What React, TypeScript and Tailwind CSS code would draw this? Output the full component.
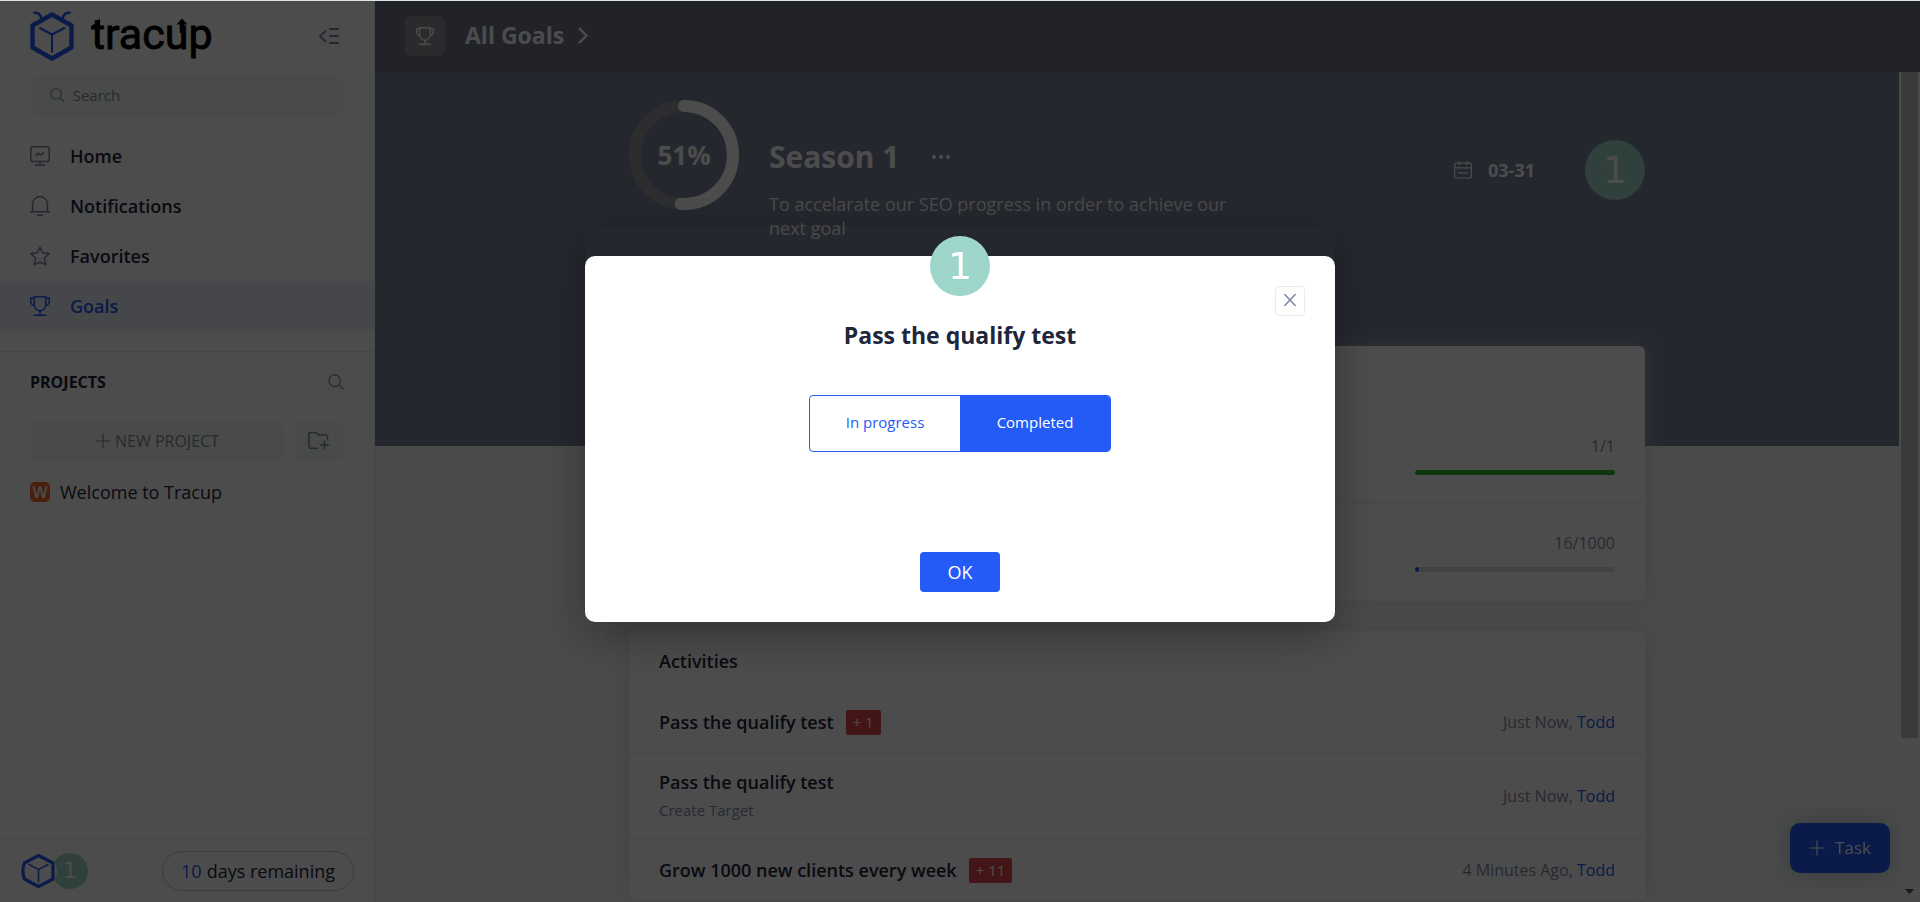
import type { ReactNode } from "react";

type IconProps = { className?: string };

function HexMark({ className }: IconProps) {
  return (
    <svg viewBox="0 0 44 50" className={className} fill="none" stroke="currentColor" aria-hidden="true">
      <path d="M22 3.5 41.5 14.5V36.5L22 47.5 2.5 36.5V14.5Z" strokeWidth="4.5" strokeLinejoin="round" />
      <path d="M10 17 22 23.5 34.5 17M22 23.5V41" strokeWidth="2" strokeLinecap="round" />
      <path d="M4.5 1.8C8 1.6 10.500 3.500 11.500 7.500M39.500 1.800C36 1.600 33.500 3.500 32.500 7.500" strokeWidth="2.600" strokeLinecap="round" />
    </svg>
  );
}

function RoundMark({ className }: IconProps) {
  return (
    <svg viewBox="0 0 36 36" className={className} fill="none" stroke="currentColor" aria-hidden="true">
      <path d="M17.500 2.500 32 10V26L17.500 33.500 3.500 26C1.500 21 1.500 15 3.500 10Z" strokeWidth="3.200" strokeLinejoin="round" />
      <path d="M8 11.500 17.500 16.500 27 11.500M17.500 16.500V29" strokeWidth="1.500" strokeLinecap="round" />
    </svg>
  );
}

function Wordmark({ className }: IconProps) {
  return (
    <svg viewBox="0 0 130 56" className={className} role="img" aria-label="tracup">
      <text x="0" y="41" fontFamily="Roboto, 'Open Sans', sans-serif" fontSize="43" fontWeight="400" fill="#000" stroke="#000" strokeWidth=".9">
        tracup
      </text>
      <path d="M0 19 9 10.500V19Z" fill="#000" />
      <path d="M85.500 16.500 91 10.500 96.500 16.500Z" fill="#000" />
      <path d="M91 15V25" stroke="#000" strokeWidth="4.500" />
    </svg>
  );
}

function TrophyIcon({ className }: IconProps) {
  return (
    <svg viewBox="0 0 20 20" className={className} fill="none" stroke="currentColor" strokeWidth="1.500" aria-hidden="true">
      <path d="M4.200.8H15.800V8.500C15.800 12 13.200 14.700 10 14.700S4.200 12 4.200 8.500Z" />
      <path d="M4.200 2H.8V5.500C.8 7.500 2 9 4.200 9.500M15.800 2H19.200V5.500C19.200 7.500 18 9 15.800 9.500M10 14.700V19M3.500 19.200H16.500" />
    </svg>
  );
}

function HomeIcon({ className }: IconProps) {
  return (
    <svg viewBox="0 0 20 20" className={className} fill="none" stroke="currentColor" strokeWidth="1.500" aria-hidden="true">
      <rect x=".8" y=".8" width="18.400" height="14.800" rx="1.500" />
      <path d="M5.500 10 8.300 7.300 10.800 9 14 6.300M10 15.600V19M5 19.200H15" />
    </svg>
  );
}

function BellIcon({ className }: IconProps) {
  return (
    <svg viewBox="0 0 20 20" className={className} fill="none" stroke="currentColor" strokeWidth="1.500" aria-hidden="true">
      <path d="M2.500 15.500V8.300C2.500 4 5.800.8 10 .8S17.500 4 17.500 8.300V15.500M0 15.700H20M7 19.200H13" />
    </svg>
  );
}

function StarIcon({ className }: IconProps) {
  return (
    <svg viewBox="0 0 20 20" className={className} fill="none" stroke="currentColor" strokeWidth="1.500" strokeLinejoin="round" aria-hidden="true">
      <path d="M10 1.200 12.700 6.700 19 7.600 14.500 12 15.800 18.600 10 16.300 4.200 18.600 5.500 12 1 7.600 7.300 6.700Z" />
    </svg>
  );
}

function SearchIcon({ className }: IconProps) {
  return (
    <svg viewBox="0 0 16 16" className={className} fill="none" stroke="currentColor" strokeWidth="1.300" aria-hidden="true">
      <circle cx="6.700" cy="6.700" r="5.800" />
      <path d="M11 11 15.300 15.300" />
    </svg>
  );
}

function PlusIcon({ className }: IconProps) {
  return (
    <svg viewBox="0 0 16 16" className={className} fill="none" stroke="currentColor" strokeWidth="1.200" aria-hidden="true">
      <path d="M8 .5V15.500M.5 8H15.500" />
    </svg>
  );
}

function FolderPlusIcon({ className }: IconProps) {
  return (
    <svg viewBox="0 0 22 20" className={className} fill="none" stroke="currentColor" strokeWidth="1.500" strokeLinejoin="round" aria-hidden="true">
      <path d="M10 17.300H2.500C1.700 17.300 1 16.600 1 15.800V3C1 2.200 1.700 1.500 2.500 1.500H8L10.500 4H18C18.800 4 19.500 4.700 19.500 5.500V9M16.500 9.500V18.500M12 14H21" />
    </svg>
  );
}

function CollapseIcon({ className }: IconProps) {
  return (
    <svg viewBox="0 0 20 16" className={className} fill="none" stroke="currentColor" strokeWidth="1.800" strokeLinecap="round" aria-hidden="true">
      <path d="M6.500 3 1 8.200 6.500 13.500M11 1H19M11 8H19M11 15H19" />
    </svg>
  );
}

function CalendarIcon({ className }: IconProps) {
  return (
    <svg viewBox="0 0 18 18" className={className} fill="none" stroke="currentColor" strokeWidth="1.200" aria-hidden="true">
      <rect x=".6" y="2.200" width="16.800" height="14.800" rx="1.500" />
      <path d="M.6 6.800H17.400M5 0V4.500M13 0V4.500M4 11.800H14" />
    </svg>
  );
}

function ProgressRing({ percent }: { percent: number }) {
  const r = 49;
  const c = 2 * Math.PI * r;
  return (
    <div className="relative flex size-[110px] shrink-0 items-center justify-center">
      <svg viewBox="0 0 110 110" className="absolute inset-0 -rotate-90" fill="none" strokeWidth="12" aria-hidden="true">
        <circle cx="55" cy="55" r={r} stroke="#9698a2" />
        <circle cx="55" cy="55" r={r} stroke="#fff" strokeLinecap="round" strokeDasharray={`${(c * percent) / 100} ${c}`} />
      </svg>
      <span className="relative text-[26px] font-bold">{percent}%</span>
    </div>
  );
}

function Avatar({ className }: IconProps) {
  return (
    <span className={`flex shrink-0 items-center justify-center rounded-full bg-[#9ed6cb] font-['DejaVu_Sans',sans-serif] text-white ${className}`}>
      1
    </span>
  );
}

function NavItem({ icon, label, active = false }: { icon: ReactNode; label: string; active?: boolean }) {
  return (
    <a
      href="#"
      aria-current={active ? "page" : undefined}
      className={`flex h-[50px] items-center gap-5 px-[30px] text-lg font-semibold ${
        active ? "bg-[#e9eefa] text-[#245bf7]" : "text-[#20263a]"
      }`}
    >
      <span className={active ? "" : "text-[#7b85a0]"}>{icon}</span>
      {label}
    </a>
  );
}

function Sidebar() {
  return (
    <aside className="flex w-[375px] shrink-0 flex-col border-r border-[#e8ecf0] bg-white">
      <div className="flex h-[75px] items-start justify-between pt-[7px] pr-[35px] pl-[30px]">
        <a href="#" className="flex items-center gap-[17px]">
          <HexMark className="h-[50px] w-11 text-[#245bf7]" />
          <Wordmark className="h-14 w-[130px]" />
        </a>
        <button type="button" aria-label="Collapse sidebar" className="mt-5 text-[#7b85a0]">
          <CollapseIcon className="h-4 w-5" />
        </button>
      </div>
      <label className="mr-[30px] ml-[30px] flex h-10 items-center gap-2 rounded-md bg-[#f5faf8] px-5 pb-[2px] text-[#858ca6]">
        <SearchIcon className="size-4" />
        <input
          type="search"
          aria-label="Search"
          placeholder="Search"
          className="w-full bg-transparent text-[15px] outline-none placeholder:text-[#858ca6]"
        />
      </label>
      <nav className="mt-[15px]">
        <NavItem icon={<HomeIcon className="size-5" />} label="Home" />
        <NavItem icon={<BellIcon className="size-5" />} label="Notifications" />
        <NavItem icon={<StarIcon className="size-5" />} label="Favorites" />
        <NavItem icon={<TrophyIcon className="size-5" />} label="Goals" active />
      </nav>
      <section className="mt-5 flex-1 border-t border-[#e8ecf0] px-[30px] pt-[20px]">
        <div className="flex items-center justify-between">
          <h2 className="text-base leading-5 font-bold text-[#20263a]">PROJECTS</h2>
          <button type="button" aria-label="Search projects" className="text-[#858ca6]">
            <SearchIcon className="size-4" />
          </button>
        </div>
        <div className="mt-[29px] flex gap-[10px]">
          <button type="button" className="flex h-10 flex-1 items-center justify-center gap-1 rounded-md bg-[#f5faf8] text-base text-[#858ca6]">
            <PlusIcon className="size-4" />
            NEW PROJECT
          </button>
          <button type="button" aria-label="New folder" className="flex h-10 w-[50px] items-center justify-center rounded-md bg-[#f5faf8] text-[#7b85a0]">
            <FolderPlusIcon className="h-5 w-[22px]" />
          </button>
        </div>
        <a href="#" className="mt-4 flex h-[30px] items-center gap-[10px] text-lg text-[#20263a]">
          <span className="flex size-5 items-center justify-center rounded-[5px] bg-[#f0692c] text-base leading-5 font-semibold text-white">W</span>
          Welcome to Tracup
        </a>
      </section>
      <footer className="flex h-16 items-center justify-between border-t border-[#e8ecf0] pr-5 pl-[21px]">
        <div className="flex items-center">
          <span className="relative z-10 rounded-full bg-white">
            <RoundMark className="size-9 text-[#245bf7]" />
          </span>
          <Avatar className="-ml-[5px] size-9 text-[22px]" />
        </div>
        <a href="#" className="flex h-10 items-center rounded-full border border-[#c4c8d2] px-[18px] text-lg text-[#20263a]">
          <span className="mr-[5px] text-[#245bf7]">10</span>days remaining
        </a>
      </footer>
    </aside>
  );
}

function TargetRow({ value, max, done = false }: { value: number; max: number; done?: boolean }) {
  return (
    <li className="flex h-[97px] items-center justify-end border-b border-[#eceef4] px-[30px] pb-[2px] last:border-b-0">
      <div className="w-[200px]">
        <p className="text-right text-base leading-6 text-[#858ca6]">
          {value}/{max}
        </p>
        <div className="mt-3 h-[5px] overflow-hidden rounded-full bg-[#e1e1e3]">
          <div className={`h-full rounded-full ${done ? "bg-[#29b82b]" : "bg-[#245bf7]"}`} style={{ width: `${Math.max((value / max) * 100, 2)}%` }} />
        </div>
      </div>
    </li>
  );
}

function ActivityRow({ title, badge, note, time }: { title: string; badge?: string; note?: string; time: string }) {
  return (
    <li className={`flex items-center justify-between border-b border-[#eceef4] px-[30px] ${note ? "h-[87px]" : "h-[61px]"}`}>
      <div>
        <div className="flex items-center gap-3">
          <h3 className="text-lg leading-6 font-semibold text-[#20263a]">{title}</h3>
          {badge && <span className="rounded-xs bg-[#e5484b] px-[7px] text-[15px] leading-[25px] text-white">{badge}</span>}
        </div>
        {note && <p className="mt-1 text-[15px] leading-6 text-[#858ca6]">{note}</p>}
      </div>
      <p className="text-base leading-6 text-[#858ca6]">
        {time},{" "}
        <a href="#" className="text-[#245bf7]">
          Todd
        </a>
      </p>
    </li>
  );
}

function Main() {
  return (
    <main className="flex min-w-0 flex-1 flex-col">
      <header className="flex h-[71px] shrink-0 items-center gap-5 bg-[#6e768b] px-[30px] pb-[2px] text-white">
        <span className="flex size-10 items-center justify-center rounded-md bg-[#8f9299]">
          <TrophyIcon className="size-[18px]" />
        </span>
        <h1>
          <a href="#" className="flex items-center gap-[14px] text-[23px] font-bold">
            All Goals
            <svg viewBox="0 0 10 17" className="h-[17px] w-[10px]" fill="none" stroke="currentColor" strokeWidth="2.400" aria-hidden="true">
              <path d="M1 1 8.500 8.500 1 16" />
            </svg>
          </a>
        </h1>
      </header>
      <div className="flex min-h-0 flex-1">
        <div className="relative min-w-0 flex-1 overflow-y-auto bg-[#f5faf8] [scrollbar-width:none]">
          <section className="h-[374px] bg-[#7c849b] text-white">
            <div className="mx-auto flex max-w-[1016px] items-start pt-7">
              <ProgressRing percent={51} />
              <div className="ml-[30px] flex-1 pt-9">
                <div className="flex items-center gap-8">
                  <h2 className="text-[30px] leading-[42px] font-bold">Season 1</h2>
                  <button type="button" aria-label="More actions">
                    <svg viewBox="0 0 18 4" className="h-1 w-[18px]" fill="currentColor" aria-hidden="true">
                      <circle cx="2" cy="2" r="2" />
                      <circle cx="9" cy="2" r="2" />
                      <circle cx="16" cy="2" r="2" />
                    </svg>
                  </button>
                </div>
                <p className="mt-[14px] max-w-[480px] text-lg leading-6 text-white/90">
                  To accelarate our SEO progress in order to achieve our next goal
                </p>
              </div>
              <div className="flex items-center pt-10">
                <CalendarIcon className="size-[18px]" />
                <time className="mr-[50px] ml-4 text-lg font-bold">03-31</time>
                <Avatar className="size-[60px] text-[38px]" />
              </div>
            </div>
          </section>
          <div className="mx-auto -mt-[100px] flex max-w-[1016px] flex-col gap-[30px]">
            <section className="rounded-md bg-white pt-[61px] shadow-[0_0_20px_rgba(200,200,215,0.5)]">
              <ul>
                <TargetRow value={1} max={1} done />
                <TargetRow value={16} max={1000} />
              </ul>
            </section>
            <section className="rounded-md bg-white shadow-[0_0_20px_rgba(200,200,215,0.5)]">
              <h2 className="flex h-[61px] items-center px-[30px] pb-[2px] text-lg leading-6 font-semibold text-[#20263a]">Activities</h2>
              <ul>
                <ActivityRow title="Pass the qualify test" badge="+ 1" time="Just Now" />
                <ActivityRow title="Pass the qualify test" note="Create Target" time="Just Now" />
                <ActivityRow title="Grow 1000 new clients every week" badge="+ 11" time="4 Minutes Ago" />
              </ul>
            </section>
          </div>
        </div>
        <div className="flex w-[21px] shrink-0 flex-col items-center justify-between bg-[#fbfbfb] pb-2" aria-hidden="true">
          <div className="h-[81%] w-[17px] bg-[#c1c1c1]" />
          <svg viewBox="0 0 9 5" className="h-[5px] w-[9px]" fill="#505050">
            <path d="M0 0H9L4.500 5Z" />
          </svg>
        </div>
      </div>
      <button
        type="button"
        className="fixed right-[30px] bottom-[29px] flex h-[50px] w-[100px] items-center justify-center gap-[10px] rounded-[10px] bg-[#245bf7] text-[17px] font-medium text-white shadow-[0_0_24px_rgba(120,120,140,0.45)]"
      >
        <PlusIcon className="size-4" />
        Task
      </button>
    </main>
  );
}

function StatusDialog() {
  return (
    <div className="fixed inset-x-0 top-px bottom-0 z-20 flex items-start justify-center bg-black/70 pt-[225px]">
      <div role="dialog" aria-modal="true" aria-labelledby="dialog-title" className="w-[750px] max-w-full rounded-[10px] pt-[30px] shadow-[0_12px_48px_rgba(0,0,0,0.35)]">
        <div className="relative flex flex-col items-center rounded-[10px] bg-white pt-[59px] pb-[30px]">
          <Avatar className="absolute -top-5 size-[60px] text-[38px]" />
          <button
            type="button"
            aria-label="Close"
            className="absolute top-[30px] right-[30px] flex size-[30px] items-center justify-center rounded border border-[#ebe9f5] text-[#7b85a0]"
          >
            <svg viewBox="0 0 12 12" className="mb-0.5 size-3" fill="none" stroke="currentColor" strokeWidth="1.500" aria-hidden="true">
              <path d="M.3 0 11.700 12M11.700 0 .3 12" />
            </svg>
          </button>
          <h2 id="dialog-title" className="text-[23px] leading-10 font-bold text-[#20263a]">
            Pass the qualify test
          </h2>
          <div className="mt-10 flex h-[57px] w-[302px] overflow-hidden rounded border border-[#245bf7] text-[15px]">
            <button type="button" aria-pressed="false" className="flex-1 pb-[2px] text-[#245bf7]">
              In progress
            </button>
            <button type="button" aria-pressed="true" className="flex-1 bg-[#245bf7] pb-[2px] text-white">
              Completed
            </button>
          </div>
          <button type="button" className="mt-[100px] h-10 w-20 rounded bg-[#245bf7] text-lg text-white">
            OK
          </button>
        </div>
      </div>
    </div>
  );
}

export default function App() {
  return (
    <div className="flex h-screen flex-col overflow-hidden border-t border-[#dbe6e2] font-['Open_Sans','Noto_Sans',sans-serif]">
      <div className="flex min-h-0 flex-1">
        <Sidebar />
        <Main />
      </div>
      <StatusDialog />
    </div>
  );
}
